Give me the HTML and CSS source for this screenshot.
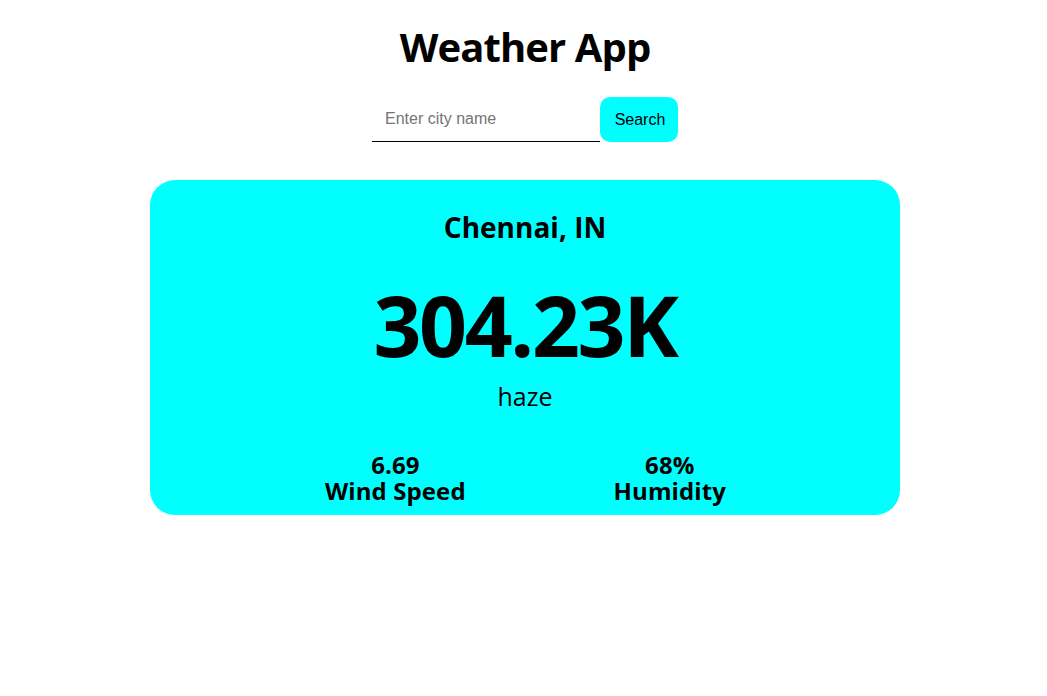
FILE: index.html
```html
<!DOCTYPE html>
<html>
<head>
<meta charset="utf-8">
<link rel="stylesheet" href="styles.css">
</head>
<body>
<div class="app">
  <h1 class="title">Weather App</h1>
  <div class="search">
    <input class="search-input" type="text" placeholder="Enter city name">
    <button class="search-btn">Search</button>
  </div>
  <div class="card">
    <div class="city">Chennai, IN</div>
    <div class="temp">304.23K</div>
    <div class="desc">haze</div>
    <div class="stats">
      <div class="stat"><div>6.69</div><div>Wind Speed</div></div>
      <div class="stat"><div>68%</div><div>Humidity</div></div>
    </div>
  </div>
</div>
</body>
</html>
```
FILE: styles.css
```css
html, body { margin: 0; padding: 0; background: #fff; }
body { font-family: "Open Sans", "Noto Sans", sans-serif; color: #000; }
.app { display: flex; flex-direction: column; align-items: center; padding-left: 3px; }
.title {
  margin: 22px 0 0;
  font-size: 40px;
  line-height: 50px;
  font-weight: 700;
  letter-spacing: -0.9px;
}
.search { display: flex; align-items: stretch; margin-top: 25px; height: 45px; }
.search-input {
  width: 228px;
  box-sizing: border-box;
  border: none;
  border-bottom: 1px solid #000;
  padding: 0 13px;
  font-family: "Liberation Sans", Arial, sans-serif;
  font-size: 16px;
  outline: none;
  background: transparent;
}
.search-input::placeholder { color: #757575; }
.search-btn {
  width: 78px;
  border: none;
  border-radius: 10px;
  background: #00ffff;
  font-family: "Liberation Sans", Arial, sans-serif;
  font-size: 16px;
  color: #000;
  padding: 0 0 0 2px;
}
.card {
  margin-top: 38px;
  width: 750px;
  height: 335px;
  box-sizing: border-box;
  background: #00ffff;
  border-radius: 25px;
  display: flex;
  flex-direction: column;
  align-items: center;
}
.city { margin-top: 28px; font-size: 28px; line-height: 38px; font-weight: 700; letter-spacing: 0; }
.temp { margin-top: 29px; font-size: 84px; line-height: 100px; font-weight: 700; letter-spacing: -2.4px; }
.desc { margin-top: 4px; font-size: 25px; line-height: 34px; }
.stats {
  margin-top: 39px;
  width: 100%;
  box-sizing: border-box;
  padding: 0 174px 0 175px;
  display: flex;
  justify-content: space-between;
}
.stat { text-align: center; font-size: 24px; line-height: 26px; font-weight: 700; letter-spacing: 0.1px; }
```
